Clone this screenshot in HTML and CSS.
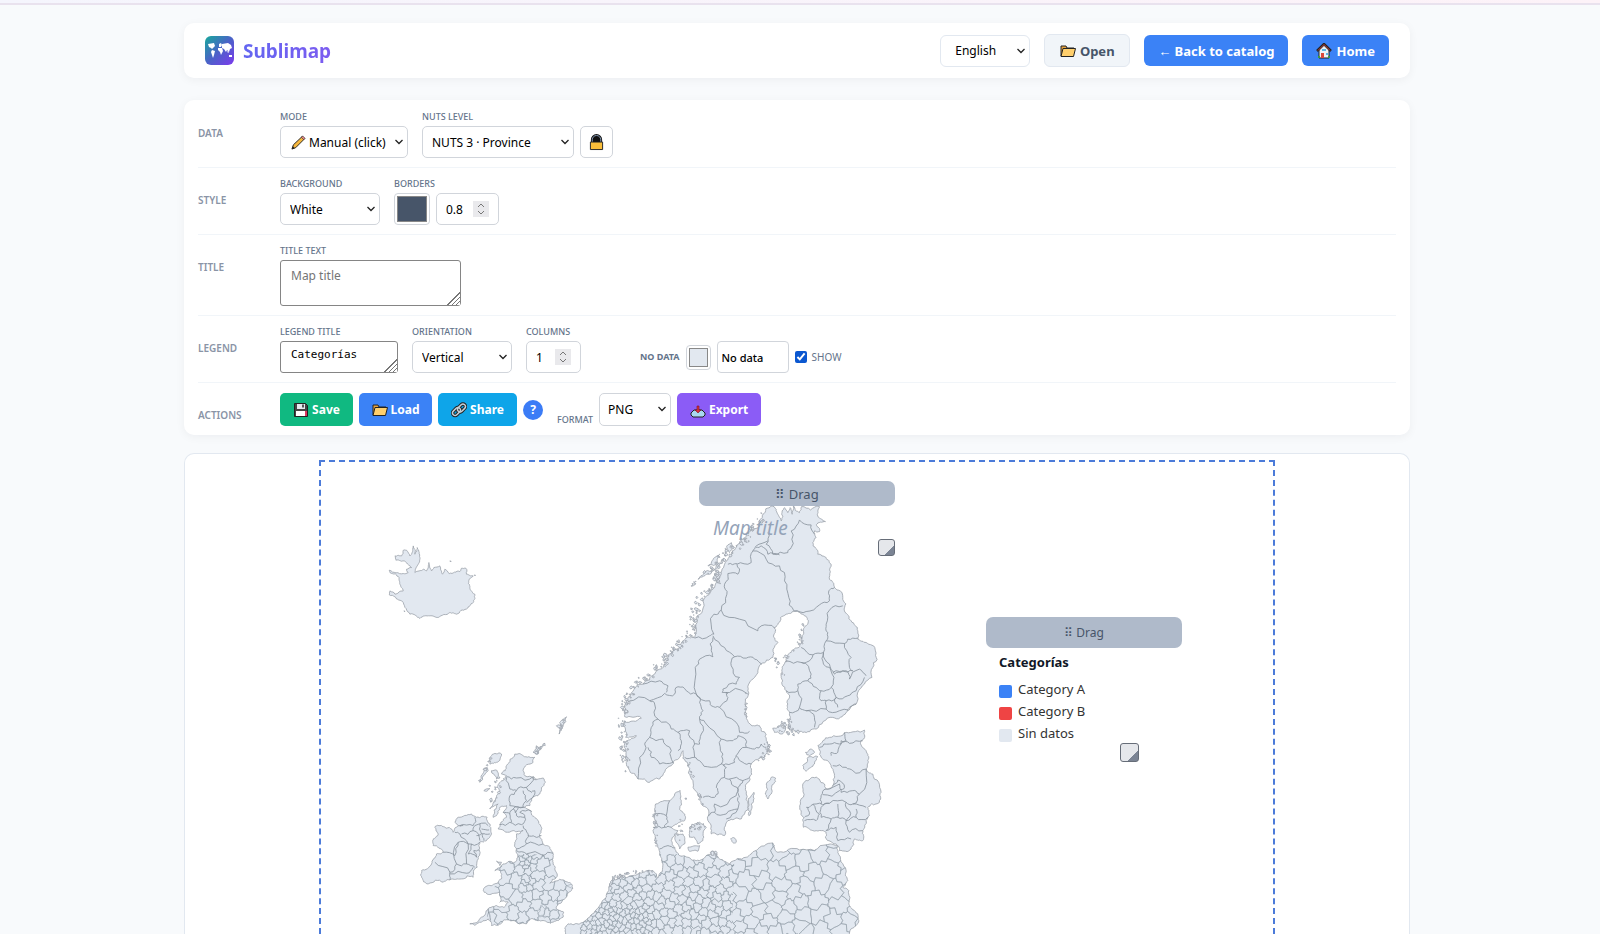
FILE: index.html
```html
<!DOCTYPE html>
<html lang="en">
<head>
<meta charset="utf-8">
<title>Sublimap</title>
<link rel="stylesheet" href="styles.css">
</head>
<body>
<svg class="defs" aria-hidden="true">
  <symbol id="folder" viewBox="0 0 16 16"><path d="M1 13V3h5l1 2h7v2" fill="#e8a33d" stroke="#222"/><path d="M1 13.500 3 5.500H15.500l-2 8z" fill="#ffcf6c" stroke="#222"/></symbol>
  <symbol id="arrow" viewBox="0 0 10 6"><path d="M1.500 1 5 4.500 8.500 1" fill="none" stroke="#222" stroke-width="1.300"/></symbol>
  <symbol id="spin" viewBox="0 0 16 16"><path d="M0 0h16v16H0z" fill="#e9e9ec"/><path d="M5 6l3-3 3 3M5 10l3 3 3-3" fill="none" stroke="#777"/></symbol>
</svg>
<div class="strip"></div>
<div class="page">
  <header class="card header">
    <svg class="logo" viewBox="0 0 29 29" aria-hidden="true">
      <defs><linearGradient id="lg" x1="0" y1="0" x2="1" y2="1"><stop offset="0" stop-color="#17a99b"/><stop offset=".5" stop-color="#4b62c8"/><stop offset="1" stop-color="#7c3aed"/></linearGradient></defs>
      <rect width="29" height="29" rx="6" fill="url(#lg)"/>
      <path d="M3 8l6-1 1 3-2 2-1 1-1-1-2-1zM7 14l3 1-1 4-1 3-1-3-1-3zM14 8l2-1 1 2-1 2-2 0zM13 12l4 0 1 3-2 4-1-3-2-2zM17 8l6-1 3 2 1 3-2 1-1 3-2-2-1 2-2-3-2-1zM24 19l3 0 0 2-3 0zM22 15l2 1-1 1z" fill="#fff"/>
    </svg>
    <h1 class="brand">Sublimap</h1>
    <div class="nav">
      <span class="pick pick-lang"><select aria-label="Language"><option>English</option></select><svg class="chev"><use href="#arrow"/></svg></span>
      <button class="btn btn-open"><svg class="ico"><use href="#folder"/></svg>Open</button>
      <a class="btn btn-blue btn-back" href="#catalog">← Back to catalog</a>
      <a class="btn btn-blue" href="#home"><svg class="ico" viewBox="0 0 16 16"><path d="M3 7v8h10V7L8 2z" fill="#eef3f5" stroke="#222"/><path d="M1 8l7-7 7 7" fill="none" stroke="#222" stroke-width="2.500"/><path d="M2 7.500 8 1.500l6 6" fill="none" stroke="#c9453f"/><path d="M5 10h3v5H5z" fill="#d9483b"/><path d="M6 6h4v2H6zM10 10h2v2h-2z" fill="#5cb8e6"/><path d="M2 14h2M12 14h2" stroke="#3e9a3e" stroke-width="2"/></svg>Home</a>
    </div>
  </header>

  <section class="card panel">
    <div class="row">
      <h2 class="row-name">Data</h2>
      <div class="field"><label for="mode">Mode</label>
        <span class="pick pick-mode"><svg class="ico pencil" viewBox="0 0 16 16"><path d="M1 15l1.500-4.500L12 1.500 14.500 4 5 13.500z" fill="#f6b73c" stroke="#222"/><path d="M11 2.500 13.500 5 15 3.500 12.500 1z" fill="#e88a8a" stroke="#222" stroke-width=".6"/><path d="M1 15l1-3 2 2z" fill="#222"/></svg><select id="mode"><option>Manual (click)</option></select><svg class="chev"><use href="#arrow"/></svg></span></div>
      <div class="field"><label for="nuts">NUTS level</label>
        <span class="group"><span class="pick pick-nuts"><select id="nuts"><option>NUTS 3 · Province</option></select><svg class="chev"><use href="#arrow"/></svg></span>
        <button class="lock" aria-label="Lock level"><svg viewBox="0 0 16 18"><path d="M3.500 9V6a4.500 4.500 0 0 1 9 0v3" fill="#111" stroke="#111" stroke-width="3"/><path d="M3.500 9V6a4.500 4.500 0 0 1 9 0v3" fill="none" stroke="#8aa0bd"/><path d="M1.500 8.500h13v8h-13z" fill="#fbbf3a" stroke="#222"/></svg></button></span></div>
    </div>
    <div class="row">
      <h2 class="row-name">Style</h2>
      <div class="field"><label for="bg">Background</label><span class="pick pick-100"><select id="bg"><option>White</option></select><svg class="chev"><use href="#arrow"/></svg></span></div>
      <div class="field"><label for="bw">Borders</label>
        <span class="group"><input class="color color-lg" type="color" value="#475569" aria-label="Border colour"><span class="num num-lg"><input id="bw" type="number" value="0.8" step="0.1"><svg class="spin"><use href="#spin"/></svg></span></span></div>
    </div>
    <div class="row">
      <h2 class="row-name">Title</h2>
      <div class="field"><label for="tt">Title text</label><textarea id="tt" class="area area-title" placeholder="Map title"></textarea></div>
    </div>
    <div class="row">
      <h2 class="row-name">Legend</h2>
      <div class="field"><label for="lt">Legend title</label><textarea id="lt" class="area area-legend">Categorías</textarea></div>
      <div class="field"><label for="or">Orientation</label><span class="pick pick-100"><select id="or"><option>Vertical</option></select><svg class="chev"><use href="#arrow"/></svg></span></div>
      <div class="field"><label for="co">Columns</label><span class="num"><input id="co" type="number" value="1"><svg class="spin"><use href="#spin"/></svg></span></div>
      <div class="nodata">
        <label for="nd">No data</label><input class="color" type="color" value="#e2e8f0" aria-label="No data colour"><input id="nd" class="text" type="text" value="No data">
        <input id="show" class="tick" type="checkbox" checked><label class="show" for="show">Show</label>
      </div>
    </div>
    <div class="row">
      <h2 class="row-name">Actions</h2>
      <div class="actions">
        <button class="btn act save"><svg class="ico" viewBox="0 0 16 16"><path d="M1.500 1.500h11l2 2v11h-13z" fill="#444" stroke="#222"/><path d="M4 2h8v5H4z" fill="#e6e9ee"/><path d="M3 9h10v5H3z" fill="#fff"/><path d="M12 9h2v5h-2z" fill="#d9365f"/><path d="M9 2.500h2v3H9z" fill="#555"/></svg>Save</button>
        <button class="btn act load"><svg class="ico"><use href="#folder"/></svg>Load</button>
        <button class="btn act share"><svg class="ico" viewBox="0 0 16 16"><g fill="none" stroke-linejoin="round"><g stroke="#222" stroke-width="3.500"><rect x="1" y="7" width="9" height="5" rx="2.500" transform="rotate(-45 5.500 9.500)"/><rect x="6" y="3.500" width="9" height="5" rx="2.500" transform="rotate(-45 10.500 6)"/></g><g stroke="#c6d0d8" stroke-width="1.500"><rect x="1" y="7" width="9" height="5" rx="2.500" transform="rotate(-45 5.500 9.500)"/><rect x="6" y="3.500" width="9" height="5" rx="2.500" transform="rotate(-45 10.500 6)"/></g></g></svg>Share</button>
        <button class="help" aria-label="Help">?</button>
        <label class="format" for="fmt">Format</label>
        <span class="pick pick-fmt"><select id="fmt"><option>PNG</option></select><svg class="chev"><use href="#arrow"/></svg></span>
        <button class="btn act export"><svg class="ico" viewBox="0 0 16 16"><path d="M1 11l3-3h8l3 3v2l-2 2H3l-2-2z" fill="#a9d8f0" stroke="#222"/><path d="M8 11 5 8H7V4h2v4h2z" fill="#d92f3f" stroke="#7c1420" stroke-width=".6"/></svg>Export</button>
      </div>
    </div>
  </section>

  <main class="canvas">
    <div class="paper">
      <svg id="map" class="map" viewBox="321 461 953 473" preserveAspectRatio="xMidYMin slice" role="img" aria-label="Map of Europe"></svg>
      <div class="box box-title">
        <div class="drag">⠿ Drag</div>
        <p class="map-title">Map title</p>
        <span class="grip"></span>
      </div>
      <div class="box box-legend">
        <div class="drag">⠿ Drag</div>
        <h3>Categorías</h3>
        <ul>
          <li><i class="sw a"></i>Category A</li>
          <li><i class="sw b"></i>Category B</li>
          <li><i class="sw n"></i>Sin datos</li>
        </ul>
        <span class="grip"></span>
      </div>
    </div>
  </main>
</div>
<script src="map.js"></script>
</body>
</html>
```
FILE: styles.css
```css
* { box-sizing: border-box; }
body {
  margin: 0; height: 100vh; overflow: hidden; display: flex; flex-direction: column;
  background: #f8fafc; color: #111827; font: 12px/16px "Noto Sans", "Open Sans", sans-serif;
}
h1, h2, h3, p, ul { margin: 0; padding: 0; }
.defs { position: absolute; width: 0; height: 0; }
.strip { flex: none; height: 5px; background: linear-gradient(90deg, #f5f5fd, #fdf2f8); border-bottom: 2px solid #e9e2ee; }
.page { flex: 1; min-height: 0; display: flex; flex-direction: column; width: 100%; max-width: 1232px; margin: 0 auto; padding: 18px 6px 0 0; }
.card { flex: none; background: #fff; border-radius: 10px; box-shadow: 0 2px 10px rgba(15, 23, 42, .05); }

.header { display: flex; align-items: center; gap: 9px; min-height: 55px; padding: 0 21px; }
.logo { width: 29px; height: 29px; }
.brand { font-size: 19px; line-height: 28px; font-weight: 700; background: linear-gradient(90deg, #6366f1, #7c5cf0); -webkit-background-clip: text; background-clip: text; color: transparent; }
.nav { display: flex; align-items: center; gap: 14px; margin-left: auto; }
.btn { display: inline-flex; align-items: center; justify-content: center; gap: 4px; height: 31px; padding: 0 14px; border: 0; border-radius: 6px; color: #fff; font: 700 13px/18px "Noto Sans", sans-serif; text-decoration: none; white-space: nowrap; }
.btn-blue { background: #3b82f6; }
.btn-open { min-width: 86px; height: 33px; border: 1px solid #e2e8f0; background: #f1f5f9; color: #475569; }
.ico { width: 16px; height: 16px; flex: none; }

.pick { position: relative; display: inline-block; height: 32px; }
.pick select { appearance: none; width: 100%; height: 100%; padding: 1px 10px 0 9px; border: 1px solid #d1d5db; border-radius: 5px; background: #fff; color: #000; font: 12px/16px "Noto Sans", sans-serif; }
.chev { position: absolute; right: 4px; top: 13px; width: 10px; height: 6px; pointer-events: none; }
.pick-lang { width: 90px; }
.pick-lang select { padding-left: 14px; border-color: #e2e8f0; border-radius: 6px; }
.pick-mode { width: 128px; }
.pick-mode select { padding-left: 28px; }
.pencil { position: absolute; left: 11px; top: 9px; width: 15px; height: 15px; }
.pick-nuts { width: 152px; }
.pick-100 { width: 100px; }
.pick-fmt { width: 72px; height: 33px; }
.pick-fmt select { padding-left: 8px; }

.panel { margin: 22px 0 18px; padding: 1px 14px 0; }
.row { display: flex; align-items: flex-start; gap: 14px; padding: 10px 0 9px; border-bottom: 1px solid #f1f5f9; }
.row:last-child { border-bottom: 0; }
.row-name { width: 68px; padding-top: 16px; color: #8a94a6; font-size: 10px; line-height: 12px; font-weight: 600; text-transform: uppercase; }
.field { display: flex; flex-direction: column; gap: 3px; }
label { color: #64748b; font-size: 9px; line-height: 12px; font-weight: 500; text-transform: uppercase; }
.group { display: flex; gap: 6px; }
.lock { width: 33px; height: 32px; padding: 0; border: 1px solid #d1d5db; border-radius: 5px; background: #fff; display: grid; place-items: center; }
.lock svg { width: 15px; height: 17px; }
.color { width: 25px; height: 25px; padding: 0; border: 1px solid #d1d5db; border-radius: 4px; background: #fff; }
.color::-webkit-color-swatch-wrapper { padding: 2px; }
.color::-webkit-color-swatch { border: 1px solid #888; }
.color-lg { width: 36px; height: 32px; }
.num { position: relative; width: 55px; height: 32px; }
.num-lg { width: 63px; }
.num input { width: 100%; height: 100%; padding: 0 9px; border: 1px solid #d1d5db; border-radius: 5px; font: 12px/16px "Noto Sans", sans-serif; appearance: textfield; }
.num input::-webkit-inner-spin-button { appearance: none; }
.spin { position: absolute; right: 10px; top: 8px; width: 16px; height: 16px; }
.area { display: block; padding: 7px 10px; border: 1px solid #858585; border-radius: 3px; resize: both; overflow: hidden; font: 12px/16px "Noto Sans", sans-serif; }
.area::placeholder { color: #757575; }
.area::-webkit-resizer { background: linear-gradient(135deg, #fff 50%, transparent 50%), repeating-linear-gradient(135deg, #777 0 1px, #fff 1px 3px); }
.area-title { width: 181px; height: 46px; }
.area-legend { width: 118px; height: 32px; padding-top: 5px; font: 11px/16px "DejaVu Sans Mono", monospace; }
.nodata { display: flex; align-items: center; gap: 6px; height: 32px; margin: 15px 0 0 45px; }
.nodata label { font-size: 9px; font-weight: 700; }
.nodata .show { margin-left: -1px; font-size: 10px; font-weight: 400; }
.text { width: 72px; height: 32px; padding: 0 4px; border: 1px solid #d1d5db; border-radius: 4px; font: 500 11px/16px "Noto Sans", sans-serif; }
.tick { width: 12px; height: 12px; margin: 0; accent-color: #0b57d0; }
.actions { display: flex; align-items: center; gap: 6px; }
.act { height: 33px; min-width: 73px; padding: 0 10px; border-radius: 5px; font-size: 12px; gap: 3px; }
.save { background: #10b981; }
.load { background: #3b82f6; }
.share { background: #0ea5e9; min-width: 79px; }
.export { background: #8b5cf6; min-width: 84px; }
.help { width: 20px; height: 20px; padding: 0; border: 0; border-radius: 50%; background: #3b7cf6; color: #fff; font: 700 12px/20px "Noto Sans", sans-serif; }
.format { align-self: flex-end; margin-left: 8px; }

.canvas { flex: 1; min-height: 0; padding: 6px 134px 0; border: 1px solid #e2e8f0; border-bottom: 0; border-radius: 10px 10px 0 0; background: #fff; }
.paper { position: relative; height: 100%; border: 2px dashed #4c7bd9; border-bottom: 0; }
.map { display: block; width: 100%; height: 100%; }
.map .land { fill: #e2e8f0; stroke: #9aa1a9; stroke-width: .8; }
.map .line { fill: none; stroke: #858f99; stroke-width: .8; stroke-linejoin: round; }
.map .cells { stroke: #8f9aa5; stroke-width: .5; }
.box { position: absolute; width: 196px; }
.box-title { left: 378px; top: 19px; }
.box-legend { left: 665px; top: 155px; }
.drag { height: 25px; border-radius: 7px; background: rgba(148, 163, 184, .75); color: #475569; font-size: 13px; line-height: 27px; text-align: center; }
.box-legend .drag { height: 31px; font-size: 12px; line-height: 32px; }
.map-title { padding: 10px 14px; color: #94a3b8; font-size: 19px; line-height: 24px; font-style: italic; }
.grip { position: absolute; width: 17px; height: 17px; right: 0; top: 58px; border: 1px solid #666d78; border-radius: 3px; background: linear-gradient(135deg, #e5e7eb 68%, #7b8494 70%); }
.box-legend .grip { width: 19px; height: 19px; right: 43px; top: 126px; }
.box-legend h3 { padding: 4px 13px 6px; font-size: 13px; line-height: 20px; }
.box-legend ul { padding-left: 13px; list-style: none; }
.box-legend li { display: flex; align-items: center; gap: 6px; height: 22px; color: #333; font-size: 13px; }
.sw { width: 13px; height: 13px; margin-top: 4px; border-radius: 2px; }
.sw.a { background: #3b82f6; }
.sw.b { background: #ef4444; }
.sw.n { background: #e2e8f0; }
```
FILE: map.js
```js
const NS = 'http://www.w3.org/2000/svg';
const svg = document.getElementById('map');

let seed = 7;
const rnd = () => (seed = (seed * 16807) % 2147483647) / 2147483647;
const parse = s => s.trim().split(/\s+/).map(p => p.split(',').map(Number));
const d = (pts, close) => 'M' + pts.map(p => p[0].toFixed(1) + ' ' + p[1].toFixed(1)).join('L') + (close ? 'Z' : '');

function add(parent, tag, attrs) {
  const el = document.createElementNS(NS, tag);
  for (const k in attrs) el.setAttribute(k, attrs[k]);
  parent.appendChild(el);
  return el;
}

// Midpoint displacement, so that coasts and borders look natural.
function rough(pts, close, amp, depth) {
  for (let k = 0; k < depth; k++) {
    const out = [];
    const n = close ? pts.length : pts.length - 1;
    for (let i = 0; i < n; i++) {
      const a = pts[i], b = pts[(i + 1) % pts.length];
      const dx = b[0] - a[0], dy = b[1] - a[1], len = Math.hypot(dx, dy), t = (rnd() - .5) * amp;
      out.push(a);
      if (len > 5 && len < 300) out.push([(a[0] + b[0]) / 2 - dy * t, (a[1] + b[1]) / 2 + dx * t]);
    }
    if (!close) out.push(pts[pts.length - 1]);
    pts = out;
  }
  return pts;
}

// Region mesh: scattered seeds with local spacing, then their Voronoi cells.
function mesh(x0, y0, x1, y1, radius) {
  const seeds = [];
  for (let i = 0; i < 24000; i++) {
    const x = x0 + rnd() * (x1 - x0), y = y0 + rnd() * (y1 - y0), r = radius(x, y);
    if (seeds.every(s => Math.hypot(s[0] - x, s[1] - y) > Math.max(r, s[2]) * .9)) seeds.push([x, y, r]);
  }
  let path = '';
  for (const s of seeds) {
    const m = s[2] * 2;
    let cell = [[s[0] - m, s[1] - m], [s[0] + m, s[1] - m], [s[0] + m, s[1] + m], [s[0] - m, s[1] + m]];
    for (const t of seeds) {
      if (t === s || Math.hypot(t[0] - s[0], t[1] - s[1]) > 2.9 * m) continue;
      const nx = t[0] - s[0], ny = t[1] - s[1], c = (t[0] * t[0] + t[1] * t[1] - s[0] * s[0] - s[1] * s[1]) / 2;
      const side = p => p[0] * nx + p[1] * ny - c;
      const out = [];
      cell.forEach((a, i) => {
        const b = cell[(i + 1) % cell.length], u = side(a), v = side(b);
        if (u <= 0) out.push(a);
        if (u < 0 !== v < 0) out.push([a[0] + (b[0] - a[0]) * u / (u - v), a[1] + (b[1] - a[1]) * u / (u - v)]);
      });
      cell = out;
    }
    // Bend each shared edge by an amount that depends only on its position.
    const bent = [];
    cell.forEach((a, i) => {
      const b = cell[(i + 1) % cell.length];
      const flip = a[0] < b[0] ? 1 : -1;
      bent.push(a);
      for (const f of [.33, .67]) {
        const g = flip > 0 ? f : 1 - f;
        const h = Math.sin((a[0] + b[0]) * 1.3 + (a[1] + b[1]) * 2.1 + g * 9) * .2 * flip;
        bent.push([a[0] + (b[0] - a[0]) * f - (b[1] - a[1]) * h, a[1] + (b[1] - a[1]) * f + (b[0] - a[0]) * h]);
      }
    });
    path += d(bent, true);
  }
  return path;
}

let clipId = 0;
function country(o) {
  const g = add(svg, 'g', { transform: `translate(${o.at}) scale(.33333)` });
  const scaled = { 'vector-effect': 'non-scaling-stroke' };
  for (const s of o.land) {
    const path = d(rough(parse(s), true, o.amp || .5, 3), true);
    add(g, 'path', { class: 'land', d: path, ...scaled });
    if (o.mesh && s === o.land[0]) {
      const id = 'clip' + clipId++;
      add(add(g, 'clipPath', { id }), 'path', { d: path });
      const inner = add(g, 'g', { 'clip-path': `url(#${id})` });
      for (const m of o.mesh) {
        const mid = 'clip' + clipId++;
        add(add(inner, 'clipPath', { id: mid }), 'path', { d: m.area });
        add(inner, 'path', { class: 'line cells', 'clip-path': `url(#${mid})`, d: mesh(...m.box, m.radius), ...scaled });
      }
    }
  }
  for (const l of o.lines || []) add(g, 'path', { class: 'line', d: d(rough(parse(l), false, .45, 2), false), ...scaled });
  for (const c of o.skerries || []) {
    const pts = parse(c.along);
    for (let i = 0; i < c.count; i++) {
      const k = Math.floor(rnd() * (pts.length - 1)), t = rnd(), w = c.spread;
      const x = pts[k][0] + (pts[k + 1][0] - pts[k][0]) * t + (rnd() - .5) * w;
      const y = pts[k][1] + (pts[k + 1][1] - pts[k][1]) * t + (rnd() - .5) * w;
      const r = 1 + rnd() * rnd() * c.size;
      const ring = [0, 1, 2, 3, 4, 5].map(n => [x + Math.cos(n) * r * (.6 + rnd()), y + Math.sin(n * 1.05) * r * (.6 + rnd())]);
      add(g, 'path', { class: 'land', d: d(ring, true), ...scaled });
    }
  }
}

// Iceland
country({ at: '360 500', amp: .3, land: [
  '160,135 165,160 172,140 180,170 175,190 165,215 190,205 200,210 207,185 215,210 222,200 240,195 248,220 255,205 268,218 300,212 305,202 318,202 320,220 340,225 328,235 330,260 345,280 340,305 320,325 290,340 270,335 235,350 210,345 180,353 150,340 130,305 105,288 88,282 90,270 105,280 130,270 120,250 118,230 90,215 88,208 130,218 145,215 140,205 155,200 130,180 108,178 105,165 125,165 130,148 140,148 150,165 155,160',
  '270,180 274,181 272,183', '132,330 135,331 134,333', '344,222 347,223 345,225'] });

// Norway, Sweden, Finland
country({ at: '600 640', amp: .4, land: [
  '515,-405 530,-395 535,-380 545,-360 548,-390 555,-400 565,-385 572,-400 578,-380 582,-405 600,-385 606,-403 660,-403 655,-375 678,-358 650,-348 660,-328 645,-330 650,-310 640,-295 655,-260 680,-250 695,-230 690,-185 705,-160 730,-130 735,-90 755,-60 775,-30 775,-5 800,5 828,30 820,80 795,130 770,190 740,215 700,230 650,265 610,275 570,268 568,245 570,215 565,190 560,150 545,110 548,80 560,60 575,35 598,20 605,-5 612,-35 625,-50 615,-75 585,-88 560,-80 543,-70 525,-40 523,-10 535,5 520,50 485,70 465,110 445,150 443,200 452,250 480,255 500,280 505,310 495,350 455,370 450,410 440,460 435,520 425,535 385,540 375,585 335,580 325,540 320,500 300,470 280,420 265,370 250,330 240,350 215,375 180,415 150,425 115,415 90,390 80,350 75,310 110,285 78,290 75,240 125,232 75,228 75,200 85,170 130,130 165,100 200,60 240,20 260,-10 285,-10 290,-70 310,-120 345,-160 360,-200 380,-240 400,-270 415,-290 440,-320 480,-345 490,-380',
  '295,-185 320,-210 350,-225 370,-235 350,-215 330,-200', '325,-225 345,-250 360,-260 355,-235', '382,-285 395,-295 405,-280 390,-265',
  '345,-200 365,-205 355,-180 345,-185',
  '528,412 515,410 500,430 497,460 505,475 515,460 522,430', '463,455 445,500 448,525 455,490',
  '520,262 540,255 558,262 545,280 525,275', '393,595 405,592 410,605 400,606'],
  lines: [
    '505,-325 500,-290 520,-260 565,-265 575,-280 575,-330 600,-363 635,-348 645,-320',
    '470,-280 485,-285 505,-260 540,-258', '460,-270 500,-245 540,-225 555,-180 568,-130 583,-90', '460,-270 470,-285 505,-300',
    '460,-270 455,-235 412,-230 415,-200 385,-202 375,-170 382,-140 365,-92 343,-80 343,-20 330,-15 285,-8', '412,-232 385,-230',
    '365,-92 420,-65 475,-30 485,-45 525,-38', '340,-15 375,20 405,48 440,52 465,55 487,70',
    '583,-90 620,-88 660,-108 690,-120 688,-150 705,-160', '730,-105 690,-92 680,-50 685,-25 680,0 735,8 745,-5 775,-8',
    '680,0 672,35 640,42 605,20', '735,8 755,50 750,80 760,90 730,90 705,100 690,70 672,35',
    '340,-10 335,30 340,48 300,55 287,80 290,160', '405,48 395,75 420,110 410,130 370,145 368,155 445,160',
    '290,160 330,180 335,195 360,200 385,170 380,155',
    '85,182 150,180 195,158 225,160 235,138 260,150 290,160 300,185 310,210 300,235 305,280 300,310 285,310 270,270 235,275 215,265 175,235 165,190 150,180',
    '130,130 180,120 205,135 200,155', '175,235 155,260 150,290 135,310 120,350 115,415', '150,290 190,295 215,330 220,365 180,370 155,350 145,320',
    '235,275 245,300 235,330', '285,310 285,350 300,360 335,380 365,370 370,340 365,295 320,250 300,235',
    '360,200 410,245 420,275 450,272', '365,295 400,300 415,285 430,290 440,320 410,345 405,365 370,375', '440,320 465,325 485,310 500,320',
    '410,345 430,365 455,370', '365,370 380,380 375,410 390,415 430,420 450,410', '375,410 350,440 355,460 345,470 310,470',
    '390,415 412,440 410,465 345,490 345,515 380,520 415,505 415,470', '430,420 415,440 420,470', '325,525 345,515', '380,535 415,505', '255,350 285,350', '380,155 385,160',
    '560,150 595,150 600,200 570,215', '595,150 595,130 625,120 650,140 665,150 665,180 680,180 680,205 620,210 600,200',
    '605,65 635,55 640,42', '672,35 672,70 698,100 695,140 665,150', '560,60 605,65 635,100 625,120', '700,95 740,90 750,115 780,85 800,105',
    '695,140 710,170 745,165 770,150 795,110', '680,205 720,210 770,190', '620,210 645,230 645,260', '710,170 715,200', '680,180 710,170'],
  skerries: [
    { along: '80,380 72,310 68,220 85,165 140,110 195,60 245,5 280,-30 285,-80 305,-130 350,-180 345,-225 390,-270 440,-310 490,-375', count: 230, spread: 26, size: 5 },
    { along: '270,-160 300,-190 340,-220', count: 10, spread: 16, size: 4 },
    { along: '575,240 545,262 600,275', count: 30, spread: 22, size: 4 }, { along: '500,290 508,330 480,360', count: 22, spread: 18, size: 4 },
    { along: '548,110 560,50 600,15 612,-50', count: 20, spread: 14, size: 4 }, { along: '530,50 540,90', count: 8, spread: 16, size: 4 },
    { along: '440,150 440,230', count: 8, spread: 8, size: 3 }, { along: '265,360 290,450 320,500', count: 14, spread: 10, size: 3 }] });

// Baltic states
country({ at: '600 640', amp: .4, land: [
  '795,268 785,300 800,330 805,360 800,385 820,400 845,455 830,490 805,500 810,525 800,540 790,570 790,600 765,595 755,625 720,630 710,610 685,600 680,575 640,570 612,560 612,530 603,490 610,430 640,410 675,430 680,445 700,435 705,400 695,375 665,350 655,315 690,290 740,275',
  '610,375 625,350 655,348 645,370 620,392', '618,335 632,325 645,335 630,345'],
  lines: ['660,320 690,310 720,310 740,300 735,275', '695,345 695,335 715,335 725,300 750,308 790,300', '700,375 740,380 760,390 800,385',
    '680,445 720,430 725,455 760,450 780,460 800,385', '620,500 650,490 690,488 740,485 760,490 800,500', '680,445 665,465 665,490', '700,435 715,418 735,440 720,450 670,462',
    '640,490 660,520 650,540 615,540', '625,500 630,520 615,530', '690,488 665,500 665,530 695,535 715,530', '715,490 715,530 740,540 770,530 805,530',
    '740,540 750,575 790,570', '680,570 710,560 715,600 755,595', '695,535 680,570', '740,485 750,510 740,540', '780,460 760,490', '770,505 770,530'] });

// Denmark and the continent
country({ at: '600 640', amp: .3, land: [
  '-100,900 -105,862 -95,850 -60,850 -30,830 0,795 20,770 30,730 60,710 100,705 130,695 160,690 175,712 190,670 180,640 165,600 160,570 165,520 168,490 210,480 225,460 242,450 245,480 240,505 255,520 255,540 240,545 215,560 235,570 215,600 225,620 240,645 265,650 290,660 320,645 350,640 360,655 390,670 440,650 470,630 520,607 535,635 600,628 685,612 715,615 715,635 740,690 745,720 730,740 748,750 748,790 775,820 778,840 755,865 745,900',
  '270,560 300,545 320,560 310,600 295,610 285,590 270,590', '225,580 250,580 255,610 240,625 230,605', '265,620 300,615 295,632 270,632', '30,730 48,704 38,720 30,740'],
  lines: ['165,520 200,525 210,480', '160,560 195,560 215,560', '200,525 205,545 195,560', '180,625 205,615 225,622'],
  mesh: [
    { area: 'M-60 640H405L395 900H-60z', box: [-80, 600, 420, 920],
      radius: (x, y) => y > 790 && x < 160 ? 13 : x < 130 ? 19 : y < 730 ? 28 : 22 },
    { area: 'M405 600H800V900H395z', box: [380, 590, 800, 920], radius: (x, y) => x < 640 && y > 740 ? 36 : 43 },
  ],
  skerries: [{ along: '30,715 90,698 165,688', count: 20, spread: 10, size: 4 }, { along: '170,500 165,560 175,640', count: 14, spread: 14, size: 4 },
    { along: '270,570 320,550', count: 14, spread: 20, size: 6 }, { along: '340,640 360,645', count: 5, spread: 12, size: 5 },
    { along: '245,530 240,600', count: 8, spread: 16, size: 4 }, { along: '260,470 262,480', count: 2, spread: 8, size: 4 }] });

// Great Britain
country({ at: '400 690', amp: .4, land: [
  '345,190 370,195 405,200 400,215 370,240 375,255 430,262 437,275 420,310 395,325 390,345 370,350 395,362 410,385 425,410 420,440 430,460 450,470 460,495 460,520 465,535 470,560 450,578 490,568 515,580 515,600 495,625 475,640 470,655 492,665 490,680 460,695 430,690 400,685 380,700 340,690 310,690 295,705 275,705 265,685 225,705 210,700 245,680 265,655 290,645 310,650 325,635 300,635 300,605 270,612 250,600 255,590 285,580 305,565 300,540 285,540 310,520 340,518 355,500 350,475 345,455 350,430 370,420 340,420 295,415 300,400 320,380 310,365 320,345 300,350 290,375 280,380 295,340 270,355 290,320 300,300 290,290 310,270 320,255 305,250 320,225',
  '305,190 275,195 270,220 290,215', '262,230 240,275 265,240', '275,240 290,238 300,262 290,265', '400,185 410,165 418,172 435,158 425,172 415,190', '500,78 480,95 485,105 470,105 482,115 478,130 490,105', '290,512 305,515 300,525', '252,300 270,294 260,302'],
  lines: ['320,258 350,262 400,258 380,290 350,300 330,295 320,260', '350,300 330,315 330,345 370,350 380,330 370,300', '380,290 395,305 405,300 400,320 380,335', '400,258 410,265',
    '300,402 330,395 365,402 375,380 360,365 395,362', '310,365 330,370 340,355 370,350', '330,370 335,395', '340,355 350,375 375,380', '345,365 355,352', '370,405 385,430 380,460 350,475', '385,435 405,438 425,435', '380,460 430,460', '350,480 380,490 430,495 460,488', '265,655 272,690'],
  mesh: [{ area: 'M285 490H560V720H262V640H285z', box: [240, 480, 530, 710],
    radius: (x, y) => Math.hypot(x - 438, y - 652) < 16 ? 6 : Math.hypot(x - 385, y - 510) < 32 ? 13 : Math.hypot(x - 380, y - 578) < 14 ? 9 : x > 425 && y < 580 ? 42 : x < 350 ? 36 : 27 }],
  skerries: [{ along: '235,275 280,190', count: 8, spread: 8, size: 4 }, { along: '270,280 300,270 280,340', count: 14, spread: 26, size: 6 }, { along: '405,180 430,165', count: 8, spread: 16, size: 5 }, { along: '480,120 495,85', count: 8, spread: 12, size: 4 }] });

// Ireland
country({ at: '400 690', amp: .4, land: [
  '175,380 215,370 230,380 262,380 270,400 275,430 260,450 240,455 240,490 232,530 220,560 185,565 150,568 130,575 85,580 65,560 65,540 95,520 110,490 130,485 100,465 100,445 115,430 105,410 130,408 160,425 190,405 165,395'],
  lines: ['165,425 180,430 205,460 175,455 165,495 130,485', '175,455 170,520 200,520 205,460 240,455', '105,515 150,545 170,520', '150,545 150,568', '150,550 200,548 220,530', '200,520 225,530',
    '180,405 220,405 225,380', '185,430 220,420 225,405 265,405', '220,420 240,450', '240,400 245,430 270,430', '215,460 205,490 230,500', '245,415 268,418', '250,430 252,450', '230,435 245,430', '230,500 222,480 238,478'] });
```
